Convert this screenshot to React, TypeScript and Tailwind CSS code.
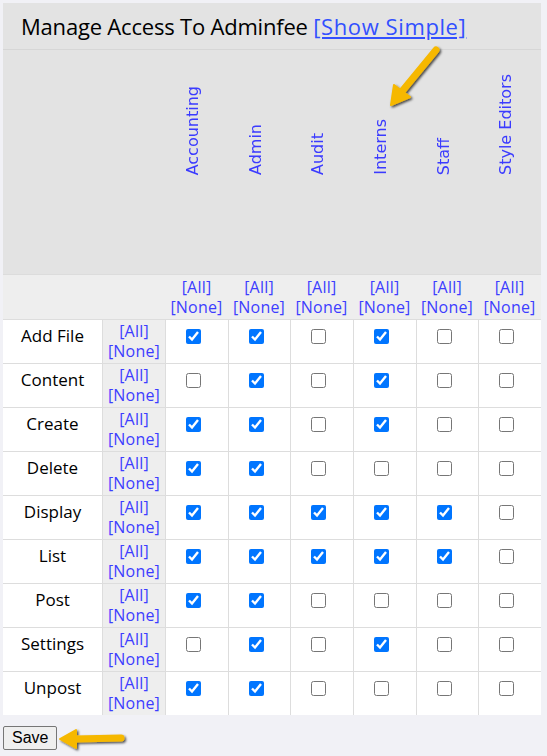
import React from "react";

const groups = ["Accounting", "Admin", "Audit", "Interns", "Staff", "Style Editors"];
const rows: [string, number[]][] = [
  ["Add File", [1, 1, 0, 1, 0, 0]],
  ["Content", [0, 1, 0, 1, 0, 0]],
  ["Create", [1, 1, 0, 1, 0, 0]],
  ["Delete", [1, 1, 0, 0, 0, 0]],
  ["Display", [1, 1, 1, 1, 1, 0]],
  ["List", [1, 1, 1, 1, 1, 0]],
  ["Post", [1, 1, 0, 0, 0, 0]],
  ["Settings", [0, 1, 0, 1, 0, 0]],
  ["Unpost", [1, 1, 0, 0, 0, 0]],
];

const ui = { fontFamily: '"Open Sans", "Noto Sans", sans-serif' };

function AllNone() {
  return (
    <div className="flex flex-col items-center text-[16px] leading-[20px] text-[#3d3dff] tracking-[0.2px]" style={ui}>
      <span>[All]</span>
      <span>[None]</span>
    </div>
  );
}

export default function App() {
  return (
    <div className="relative min-h-[756px] w-[547px] bg-[#f1f1f6] pt-[3px] pl-[3px]">
      <div className="w-[538px]">
        <div className="h-[47px] bg-[#e3e3e3] border-b border-[#d6d6d6] pl-[18px] pt-[8px] flex items-start">
          <span className="text-[22px] leading-[30px] text-black tracking-[-0.2px]" style={ui}>
            Manage Access To Adminfee{" "}
            <span className="text-[#3250ff] underline tracking-[0.6px]">[Show Simple]</span>
          </span>
        </div>
        <div className="grid grid-cols-[99px_63px_63px_62px_63px_63px_62px_63px] h-[225px] bg-[#e3e3e3] border-b border-[#dcdcdc]">
          <div />
          <div />
          {groups.map((g) => (
            <div key={g} className="flex justify-center items-end pb-[99px] pr-[7px]">
              <span
                className="[writing-mode:vertical-rl] rotate-180 text-[16px] leading-[16px] text-[#3b3bff] whitespace-nowrap"
                style={{ fontFamily: '"DejaVu Sans", sans-serif' }}
              >
                {g}
              </span>
            </div>
          ))}
        </div>
        <div className="grid grid-cols-[99px_63px_63px_62px_63px_63px_62px_63px] bg-[#eeeeee] h-[44px]">
          <div />
          <div />
          {groups.map((g) => (
            <div key={g} className="flex justify-center pt-[2px]">
              <AllNone />
            </div>
          ))}
        </div>
        {rows.map(([label, vals]) => (
          <div key={label} className="grid grid-cols-[99px_63px_63px_62px_63px_63px_62px_63px] h-[44px] bg-white">
            <div className="border-t border-[#dddddd] flex justify-center pt-[4px]">
              <span className="text-[17px] leading-[24px] text-black" style={ui}>{label}</span>
            </div>
            <div className="border-t border-l border-[#dddddd] bg-[#eeeeee] flex justify-center pt-[1px]">
              <AllNone />
            </div>
            {vals.map((v, i) => (
              <div key={i} className="border-t border-l border-[#dddddd] flex justify-center pt-[9px] pr-[7px]">
                <input type="checkbox" defaultChecked={!!v} className="w-[15px] h-[15px] m-0" />
              </div>
            ))}
          </div>
        ))}
        <div className="pt-[10px]">
          <button
            className="h-[24px] px-[8px] bg-[#efefef] border border-[#767676] rounded-[2px] text-[16px] leading-[20px] text-black"
            style={{ fontFamily: '"Liberation Sans", Arial, sans-serif' }}
          >
            Save
          </button>
        </div>
      </div>
      <svg className="absolute left-0 top-0 pointer-events-none" width="547" height="756">
        <defs>
          <filter id="sh" x="-50%" y="-50%" width="200%" height="200%">
            <feDropShadow dx="1.5" dy="1.5" stdDeviation="1.2" floodColor="#000" floodOpacity="0.7" />
          </filter>
        </defs>
        <g filter="url(#sh)">
          <line x1="436" y1="50" x2="399" y2="95" stroke="#f6b800" strokeWidth="7" strokeLinecap="round" />
          <polygon points="391,105 394,85 410,97" fill="#f6b800" stroke="#f6b800" strokeWidth="2" strokeLinejoin="round" />
          <line x1="121" y1="738" x2="75" y2="739" stroke="#f6b800" strokeWidth="7" strokeLinecap="round" />
          <polygon points="60,739 76,730 76,748" fill="#f6b800" stroke="#f6b800" strokeWidth="2" strokeLinejoin="round" />
        </g>
      </svg>
    </div>
  );
}
